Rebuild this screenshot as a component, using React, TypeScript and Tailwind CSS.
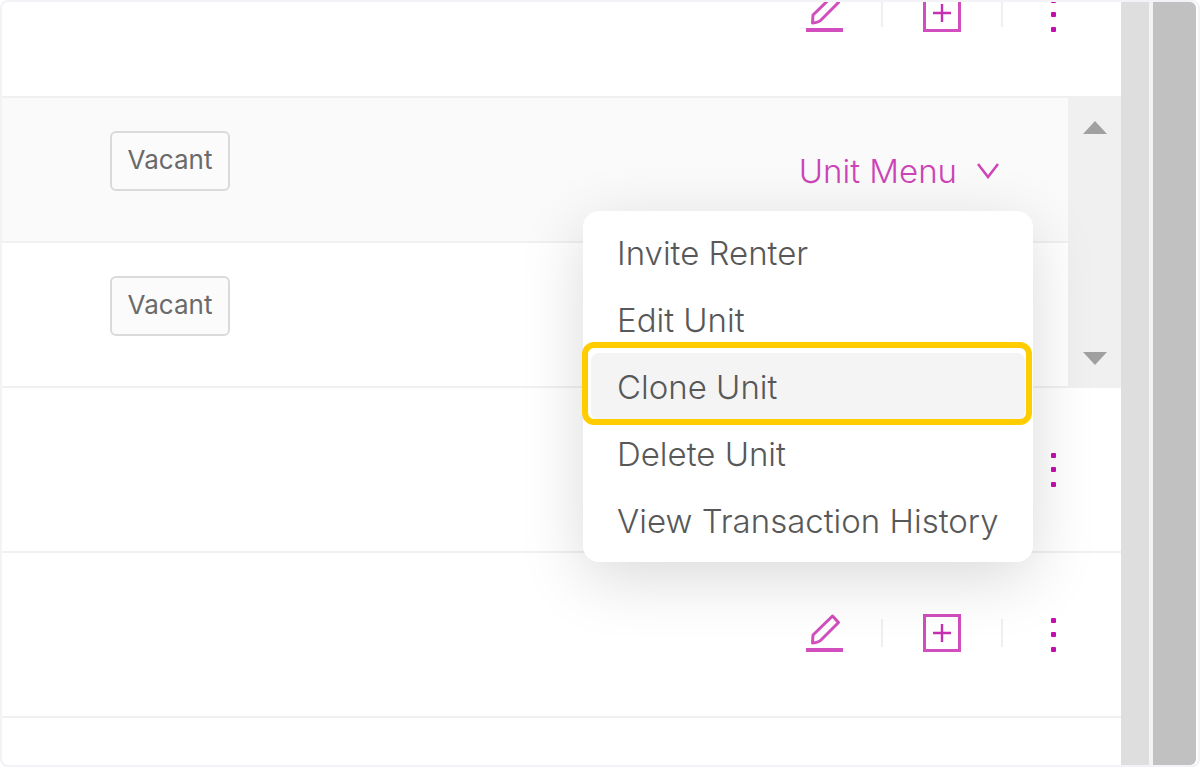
import { useState } from "react";

const MENU_ITEMS = [
  "Invite Renter",
  "Edit Unit",
  "Clone Unit",
  "Delete Unit",
  "View Transaction History",
];

function EditIcon() {
  return (
    <svg width="40" height="40" viewBox="0 0 40 40" fill="none" stroke="#d24dbd" strokeWidth="3" aria-hidden="true">
      <path d="M9.5 30 L10 22 L29.5 3 L35.5 9.5 L18 27 Q15.5 29.6 9.5 30 Z" strokeLinejoin="round" />
      <path d="M3 37 H40" strokeWidth="4" />
    </svg>
  );
}

function AddIcon() {
  return (
    <svg width="42" height="40" viewBox="0 0 42 40" fill="none" stroke="#d24dbd" aria-hidden="true">
      <rect x="3.5" y="2.5" width="35" height="35" strokeWidth="3" />
      <path d="M12 20 H30 M21 11 V29" strokeWidth="2.4" stroke="#c62fb0" />
    </svg>
  );
}

function DotsIcon() {
  return (
    <svg width="24" height="40" viewBox="0 0 24 40" fill="#c20fae" aria-hidden="true">
      <rect x="10" y="5" width="5" height="5" rx="1" />
      <rect x="10" y="19" width="5" height="5" rx="1" />
      <rect x="10" y="34" width="5" height="5" rx="1" />
    </svg>
  );
}

function PropertyRow() {
  return (
    <div className="flex h-[165px] shrink-0 items-center justify-end gap-[38px] border-b-2 border-[#f0f0f0] pr-14 pb-1">
      <button type="button" aria-label="Edit property">
        <EditIcon />
      </button>
      <span className="h-7 w-0.5 bg-[#efefef]" />
      <button type="button" aria-label="Add unit">
        <AddIcon />
      </button>
      <span className="h-7 w-0.5 bg-[#efefef]" />
      <button type="button" aria-label="More actions">
        <DotsIcon />
      </button>
    </div>
  );
}

function StatusBadge({ label }: { label: string }) {
  return (
    <span className="flex h-[60px] w-[120px] items-center justify-center rounded-md border-2 border-[#dadada] bg-[#fbfbfb] pb-0.5 text-[26px] leading-8 text-[#6a6a6a]">
      {label}
    </span>
  );
}

function UnitMenu() {
  const [open, setOpen] = useState(true);

  return (
    <div className="relative mr-[35px]">
      <button
        type="button"
        aria-expanded={open}
        onClick={() => setOpen(!open)}
        className="flex h-20 items-center gap-5 pr-[34px] text-[33px] leading-10 font-light text-[#cc44b8]"
      >
        Unit Menu
        <svg width="22" height="16" viewBox="0 0 22 16" fill="none" stroke="#cf45ba" strokeWidth="2.6" aria-hidden="true">
          <path d="M1 1 L11 14 L21 1" />
        </svg>
      </button>
      {open && (
        <ul className="absolute top-full right-0 z-10 w-[450px] rounded-2xl bg-white p-2 shadow-[0_16px_64px_rgba(0,0,0,0.15)]">
          {MENU_ITEMS.map((item) => (
            <li key={item} className="relative">
              <button
                type="button"
                className={
                  item === "Clone Unit"
                    ? "h-[67px] w-full rounded-lg bg-[#f4f4f4] pl-[26px] text-left text-[33px] leading-10 font-light whitespace-nowrap text-[#585858]"
                    : "h-[67px] w-full rounded-lg pl-[26px] text-left text-[33px] leading-10 font-light whitespace-nowrap text-[#585858]"
                }
              >
                {item}
              </button>
              {item === "Clone Unit" && (
                <span className="pointer-events-none absolute -top-[11px] -right-[7px] -bottom-[5px] -left-[9px] rounded-xl border-6 border-[#ffcc00]" />
              )}
            </li>
          ))}
        </ul>
      )}
    </div>
  );
}

export default function App() {
  return (
    <div className="flex min-h-screen overflow-hidden rounded-lg border-2 border-[#f2f2f7] bg-white font-['Inter',sans-serif]">
      <main className="flex min-w-0 flex-1 flex-col">
        <div className="flex h-24 flex-col justify-end overflow-hidden">
          <PropertyRow />
        </div>

        <div className="flex">
          <div className="min-w-0 flex-1">
            <div className="flex h-[145px] items-start justify-between border-b-2 border-[#f0f0f0] bg-[#fafafa] pt-[33px] pl-[108px]">
              <StatusBadge label="Vacant" />
              <UnitMenu />
            </div>
            <div className="flex h-[145px] items-start border-b-2 border-[#f0f0f0] pt-[33px] pl-[108px]">
              <StatusBadge label="Vacant" />
            </div>
          </div>
          <div className="flex w-[53px] flex-col items-center justify-between bg-[#f0f0f0] py-[23px]">
            <button type="button" aria-label="Scroll up">
              <svg width="24" height="13" viewBox="0 0 24 13" fill="#a0a0a0" aria-hidden="true">
                <path d="M12 0 L24 13 H0 Z" />
              </svg>
            </button>
            <button type="button" aria-label="Scroll down">
              <svg width="24" height="13" viewBox="0 0 24 13" fill="#a0a0a0" aria-hidden="true">
                <path d="M0 0 H24 L12 13 Z" />
              </svg>
            </button>
          </div>
        </div>

        <PropertyRow />
        <PropertyRow />
      </main>

      <div className="w-7 bg-[#dedede]" />
      <div className="w-1 bg-[#f3f3f3]" />
      <div className="mr-0.5 w-[43px] rounded-r-md bg-[#c1c1c1]" />
    </div>
  );
}
